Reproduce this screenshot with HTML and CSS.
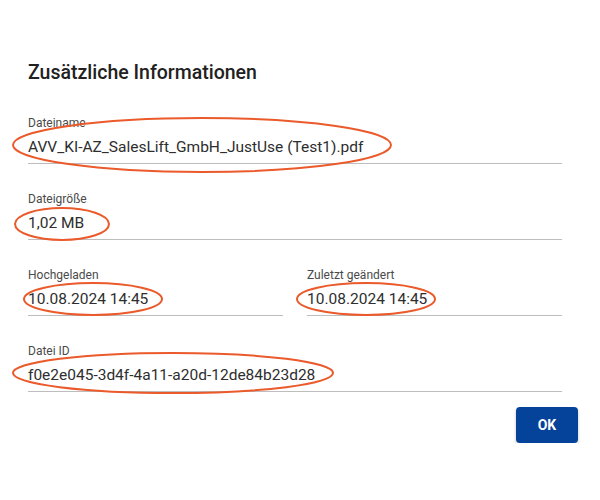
FILE: index.html
```html
<!DOCTYPE html>
<html lang="de">
<head>
  <meta charset="UTF-8" />
  <title>Zusätzliche Informationen</title>
  <link rel="stylesheet" href="styles.css">
</head>
<body>

  <div class="dialog">
    <h2 class="dialog-title">Zusätzliche Informationen</h2>

    <div class="field">
      <label>Dateiname</label>
      <div class="value">AVV_KI-AZ_SalesLift_GmbH_JustUse (Test1).pdf</div>
    </div>

    <div class="field">
      <label>Dateigröße</label>
      <div class="value">1,02 MB</div>
    </div>

    <div class="field-row">
      <div class="field">
        <label>Hochgeladen</label>
        <div class="value">10.08.2024 14:45</div>
      </div>
      <div class="field">
        <label>Zuletzt geändert</label>
        <div class="value">10.08.2024 14:45</div>
      </div>
    </div>

    <div class="field">
      <label>Datei ID</label>
      <div class="value">f0e2e045-3d4f-4a11-a20d-12de84b23d28</div>
    </div>

    <div class="actions">
      <button class="btn-ok">OK</button>
    </div>
  </div>

  <!-- Markierungen -->
  <svg class="marks" width="600" height="500" viewBox="0 0 600 500">
    <ellipse cx="202" cy="145" rx="189" ry="27" />
    <ellipse cx="62" cy="224" rx="47" ry="16" />
    <ellipse cx="93" cy="299" rx="69" ry="16" />
    <ellipse cx="366" cy="299" rx="69" ry="16" />
    <ellipse cx="173" cy="373" rx="160" ry="20" />
  </svg>

</body>
</html>
```

FILE: styles.css
```css
* { box-sizing: border-box; }
body { margin: 0; background: #fff; font-family: Roboto, 'Liberation Sans', sans-serif; color: rgba(0, 0, 0, 0.87); }
.dialog { padding: 57px 38px 0 28px; }
.dialog-title { margin: 0 0 26px; font-size: 19.5px; line-height: 32px; font-weight: 500; color: #212121; }
.field { padding-bottom: 4px; border-bottom: 1px solid #bdbdbd; margin-bottom: 27px; }
.field label { display: block; font-size: 12px; line-height: 16px; color: #4a4a4a; }
.field .value { margin-top: 4px; font-size: 15.5px; line-height: 24px; color: #2e2e2e; white-space: nowrap; }
.field-row { display: grid; grid-template-columns: 1fr 1fr; gap: 24px; }
.actions { display: flex; justify-content: flex-end; margin-top: -12px; margin-right: -16px; }
.btn-ok { width: 62px; height: 36px; border: none; border-radius: 4px; background: #05429a; color: #fff; font-family: Roboto, 'Liberation Sans', sans-serif; font-size: 14px; font-weight: 700; box-shadow: 0 2px 3px rgba(0, 0, 0, 0.25); cursor: pointer; }
.marks { position: absolute; top: 0; left: 0; pointer-events: none; }
.marks ellipse { fill: none; stroke: #ea5a2b; stroke-width: 2; }
```
